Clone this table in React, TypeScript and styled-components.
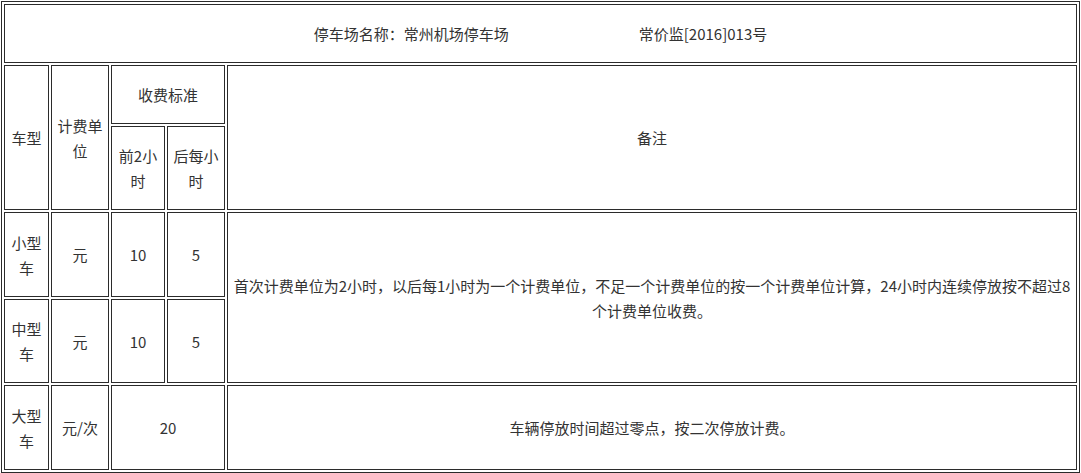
import styled, { createGlobalStyle } from 'styled-components';

const GlobalStyle = createGlobalStyle`
  html, body {
    margin: 0;
    padding: 0;
    background: #fff;
  }
  body {
    font-family: "Noto Sans CJK SC", "Noto Sans", sans-serif;
    color: #333;
  }
`;

const FeeTable = styled.table`
  margin: 1px;
  width: 1079px;
  table-layout: fixed;
  border-collapse: separate;
  border-spacing: 2px;
  border: 1px solid #2b2b2b;
  font-size: 15px;
  line-height: 25px;
`;

const Col = styled.col<{ $w: number }>`
  width: ${(p) => p.$w}px;
`;

const Row = styled.tr<{ $h: number }>`
  height: ${(p) => p.$h}px;
`;

const Cell = styled.td`
  box-sizing: border-box;
  border: 1px solid #2b2b2b;
  padding: 0 5px;
  text-align: center;
  vertical-align: middle;
  color: #333;
  word-break: break-all;
`;

const Gap = styled.span`
  display: inline-block;
  width: 130px;
`;

type Vehicle = {
  name: string;
  unit: string;
  first?: string;
  after?: string;
  flat?: string;
  h: number;
};

const vehicles: Vehicle[] = [
  { name: '小型车', unit: '元', first: '10', after: '5', h: 85 },
  { name: '中型车', unit: '元', first: '10', after: '5', h: 84 },
];

const App = () => {
  return (
    <>
      <GlobalStyle />
      <FeeTable>
        <colgroup>
          <Col $w={45} />
          <Col $w={58} />
          <Col $w={54} />
          <Col $w={58} />
          <Col $w={850} />
        </colgroup>
        <tbody>
          <Row $h={59}>
            <Cell colSpan={5}>
              停车场名称：常州机场停车场
              <Gap />
              常价监[2016]013号
            </Cell>
          </Row>
          <Row $h={59}>
            <Cell rowSpan={2}>车型</Cell>
            <Cell rowSpan={2}>计费单位</Cell>
            <Cell colSpan={2}>收费标准</Cell>
            <Cell rowSpan={2}>备注</Cell>
          </Row>
          <Row $h={84}>
            <Cell>前2小时</Cell>
            <Cell>后每小时</Cell>
          </Row>
          {vehicles.map((v, i) => (
            <Row $h={v.h} key={v.name}>
              <Cell>{v.name}</Cell>
              <Cell>{v.unit}</Cell>
              <Cell>{v.first}</Cell>
              <Cell>{v.after}</Cell>
              {i === 0 && (
                <Cell rowSpan={2}>
                  首次计费单位为2小时，以后每1小时为一个计费单位，不足一个计费单位的按一个计费单位计算，24小时内连续停放按不超过8个计费单位收费。
                </Cell>
              )}
            </Row>
          ))}
          <Row $h={85}>
            <Cell>大型车</Cell>
            <Cell>元/次</Cell>
            <Cell colSpan={2}>20</Cell>
            <Cell>车辆停放时间超过零点，按二次停放计费。</Cell>
          </Row>
        </tbody>
      </FeeTable>
    </>
  );
};

export default App;
